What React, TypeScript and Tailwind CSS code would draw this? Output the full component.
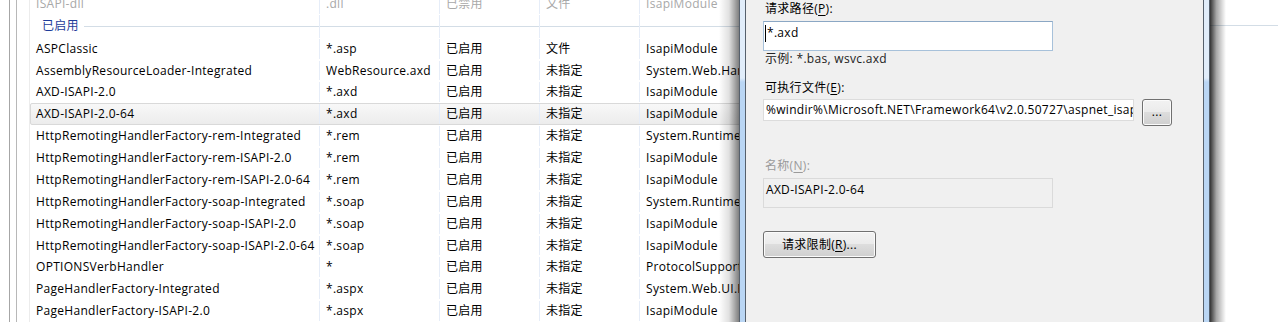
import React from "react";

const FONT = { fontFamily: "'Open Sans','Noto Sans CJK SC',sans-serif" };

type Row = [string, string, string, string, string];

const rows: Row[] = [
  ["ASPClassic", "*.asp", "已启用", "文件", "IsapiModule"],
  ["AssemblyResourceLoader-Integrated", "WebResource.axd", "已启用", "未指定", "System.Web.Handlers.AssemblyResourceLoader"],
  ["AXD-ISAPI-2.0", "*.axd", "已启用", "未指定", "IsapiModule"],
  ["AXD-ISAPI-2.0-64", "*.axd", "已启用", "未指定", "IsapiModule"],
  ["HttpRemotingHandlerFactory-rem-Integrated", "*.rem", "已启用", "未指定", "System.Runtime.Remoting"],
  ["HttpRemotingHandlerFactory-rem-ISAPI-2.0", "*.rem", "已启用", "未指定", "IsapiModule"],
  ["HttpRemotingHandlerFactory-rem-ISAPI-2.0-64", "*.rem", "已启用", "未指定", "IsapiModule"],
  ["HttpRemotingHandlerFactory-soap-Integrated", "*.soap", "已启用", "未指定", "System.Runtime.Remoting"],
  ["HttpRemotingHandlerFactory-soap-ISAPI-2.0", "*.soap", "已启用", "未指定", "IsapiModule"],
  ["HttpRemotingHandlerFactory-soap-ISAPI-2.0-64", "*.soap", "已启用", "未指定", "IsapiModule"],
  ["OPTIONSVerbHandler", "*", "已启用", "未指定", "ProtocolSupportModule"],
  ["PageHandlerFactory-Integrated", "*.aspx", "已启用", "未指定", "System.Web.UI.PageHandlerFactory"],
  ["PageHandlerFactory-ISAPI-2.0", "*.aspx", "已启用", "未指定", "IsapiModule"],
];

function TableRow({ r, gray, selected }: { r: Row; gray?: boolean; selected?: boolean }) {
  const color = gray ? "text-[#a8a8a8]" : "text-black";
  return (
    <div
      className={`flex h-[22px] items-center whitespace-nowrap text-[12px] tracking-[0.3px] ${color} ${
        selected
          ? "rounded-[2px] border border-[#d9d9d9] bg-[linear-gradient(to_bottom,#f8f8f8,#ececec)]"
          : "border border-transparent"
      }`}
    >
      <div className="flex h-full w-[289px] shrink-0 items-center border-r border-[#e6edf8] pl-[5px]">{r[0]}</div>
      <div className="flex h-full w-[120px] shrink-0 items-center border-r border-[#e6edf8] pl-[6px]">{r[1]}</div>
      <div className="flex h-full w-[100px] shrink-0 items-center border-r border-[#e6edf8] pl-[6px]">{r[2]}</div>
      <div className="flex h-full w-[100px] shrink-0 items-center border-r border-[#e6edf8] pl-[6px]">{r[3]}</div>
      <div className="flex h-full w-[200px] shrink-0 items-center pl-[6px]">{r[4]}</div>
    </div>
  );
}

function GroupHeader() {
  return (
    <div className="flex h-[23px] items-center whitespace-nowrap text-[12px] tracking-[0.3px]">
      <div className="flex h-full w-[290px] shrink-0 items-center border-r border-[#e6edf8] pl-[12px]">
        <span className="text-[#1e3c9a]">已启用</span>
        <div className="ml-[5px] h-px flex-1 bg-[#d3dde6]" />
      </div>
      <div className="flex h-full w-[120px] shrink-0 items-center border-r border-[#e6edf8]">
        <div className="h-px flex-1 bg-[#d3dde6]" />
      </div>
      <div className="flex h-full w-[100px] shrink-0 items-center border-r border-[#e6edf8]">
        <div className="h-px flex-1 bg-[#d3dde6]" />
      </div>
      <div className="flex h-full w-[100px] shrink-0 items-center border-r border-[#e6edf8]">
        <div className="h-px flex-1 bg-[#d3dde6]" />
      </div>
      <div className="flex h-full w-[200px] shrink-0 items-center">
        <div className="h-px flex-1 bg-[#d3dde6]" />
      </div>
    </div>
  );
}

function U({ children }: { children: React.ReactNode }) {
  return <span className="underline underline-offset-2">{children}</span>;
}

function WinButton({ children, className }: { children: React.ReactNode; className: string }) {
  return (
    <div
      className={`flex items-center justify-center rounded-[3px] border border-[#707070] bg-[linear-gradient(to_bottom,#f2f2f2_0%,#ebebeb_48%,#dddddd_50%,#cfcfcf_100%)] text-[12px] text-black shadow-[inset_0_0_0_1px_#fbfbfb] ${className}`}
    >
      {children}
    </div>
  );
}

function FrameSide() {
  return (
    <div className="flex h-full shrink-0">
      <div className="w-px bg-[#56606c]" />
      <div className="w-[5px] bg-[linear-gradient(to_bottom,#e1edfa_0px,#e1edfa_78px,#bad6f4_82px,#bad6f4_100%)]" />
      <div className="w-px bg-[#56606c]" />
    </div>
  );
}

export default function App() {
  return (
    <div className="relative flex h-[322px] w-[1278px] overflow-hidden bg-white" style={FONT}>
      {/* Left table */}
      <div className="flex h-full w-[739px] shrink-0 overflow-hidden bg-white">
        <div className="flex h-full w-[30px] shrink-0">
          <div className="ml-[9px] h-full w-px bg-[#a6a6a6]" />
          <div className="ml-[6px] h-full w-px bg-[#b8b8b8]" />
          <div className="ml-[12px] h-full w-px bg-[#ececec]" />
        </div>
        <div className="mt-[-7px] flex flex-col">
          <TableRow r={["ISAPI-dll", ".dll", "已禁用", "文件", "IsapiModule"]} gray />
          <GroupHeader />
          {rows.map((r, i) => (
            <TableRow key={i} r={r} selected={i === 3} />
          ))}
        </div>
      </div>

      {/* Dialog */}
      <div className="flex h-full w-[471px] shrink-0">
        <FrameSide />
        <div className="flex h-full flex-1 flex-col bg-[#f0f0f0] pl-[17px] text-[12px] tracking-[0.3px] text-black">
          <div className="flex h-[16px] items-center pl-[2px] pt-[1px]">
            请求路径(<U>P</U>):
          </div>
          <div className="mt-[5px] flex h-[30px] w-[290px] items-start border border-[#a7c1da] border-t-[#8ba7c4] bg-white pl-[1px] pt-[2px]">
            <div className="mt-[1px] h-[17px] w-px bg-black" />
            <span className="ml-[1px] leading-[18px]">*.axd</span>
          </div>
          <div className="flex h-[16px] items-center pl-[2px] text-[#222]">示例: *.bas, wsvc.axd</div>
          <div className="mt-[12px] flex h-[16px] items-center pl-[2px] pt-[1px]">
            可执行文件(<U>E</U>):
          </div>
          <div className="mt-[4px] flex items-start gap-[8px]">
            <div className="flex h-[22px] w-[371px] items-center overflow-hidden whitespace-nowrap border border-[#dcdcdc] bg-white pl-[2px]">
              %windir%\Microsoft.NET\Framework64\v2.0.50727\aspnet_isapi.dll
            </div>
            <WinButton className="h-[27px] w-[30px] pb-[2px]">...</WinButton>
          </div>
          <div className="mt-[31px] flex h-[16px] items-center pl-[2px] pt-[1px] text-[#9a9a9a]">
            名称(<U>N</U>):
          </div>
          <div className="mt-[5px] flex h-[30px] w-[290px] items-start border border-[#dadada] bg-[#f0f0f0] pl-[2px] pt-[2px]">
            <span className="leading-[18px]">AXD-ISAPI-2.0-64</span>
          </div>
          <WinButton className="mt-[23px] h-[27px] w-[113px]">
            请求限制(<U>R</U>)...
          </WinButton>
        </div>
        <FrameSide />
      </div>

      {/* Right area */}
      <div className="flex h-full flex-1 flex-col bg-white pt-[25px]">
        <div className="h-px w-full bg-[#d3dde6]" />
      </div>

      {/* Window shadows */}
      <div className="pointer-events-none absolute left-[719px] top-0 h-full w-[20px] bg-[linear-gradient(to_right,rgba(0,0,0,0),rgba(0,0,0,0.12)_50%,rgba(0,0,0,0.5))]" />
      <div className="pointer-events-none absolute left-[1210px] top-0 h-full w-[16px] bg-[linear-gradient(to_right,rgba(0,0,0,0.8),rgba(0,0,0,0.35)_40%,rgba(0,0,0,0))]" />
    </div>
  );
}
